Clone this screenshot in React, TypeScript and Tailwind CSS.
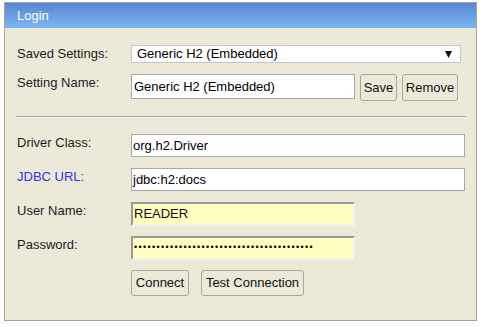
import React from 'react';

const font = { fontFamily: '"Liberation Sans", Arial, sans-serif' };

const Label = ({ children, blue }: { children: React.ReactNode; blue?: boolean }) => (
  <div className={`w-[114px] shrink-0 pt-[1px] text-[13px] leading-[15px] ${blue ? 'text-[#3232f0]' : 'text-[#1c1c1c]'}`}>
    {children}
  </div>
);

const Btn = ({ children, w }: { children: React.ReactNode; w: string }) => (
  <button
    className={`${w} h-full bg-[#ece9d8] border border-[#aaa79a] rounded-[3px] text-[13px] text-[#111] flex items-center justify-center`}
  >
    {children}
  </button>
);

export default function App() {
  const password = '•'.repeat(40);

  return (
    <div className="bg-white w-[482px] h-[327px] pl-[4px] pt-[2px]" style={font}>
      <div className="w-[473px] h-[319px] border border-[#a8a597] bg-[#ece9d8] flex flex-col">
        {/* Header */}
        <div className="h-[25px] bg-gradient-to-b from-[#5886d2] to-[#7bb6f4] flex items-center pl-[12px] text-white text-[13px]">
          Login
        </div>

        <div className="flex flex-col pl-[12px]">
          {/* Saved Settings */}
          <div className="flex mt-[17px] h-[18px]">
            <Label>Saved Settings:</Label>
            <div className="w-[330px] h-[18px] bg-white border border-[#c4c4c4] flex items-center justify-between pl-[5px] pr-[8px] text-[13px] text-black">
              <span>Generic H2 (Embedded)</span>
              <svg width="7" height="7" viewBox="0 0 7 7">
                <path d="M0 0 H7 L3.5 7 Z" fill="#111" />
              </svg>
            </div>
          </div>

          {/* Setting Name */}
          <div className="flex mt-[11px] h-[27px]">
            <Label>Setting Name:</Label>
            <div className="w-[224px] h-[25px] bg-white border border-[#a9a9a9] flex items-center pl-[2px] text-[13px] text-black">
              Generic H2 (Embedded)
            </div>
            <div className="flex gap-[5px] ml-[5px]">
              <Btn w="w-[37px]">Save</Btn>
              <Btn w="w-[56px]">Remove</Btn>
            </div>
          </div>

          {/* Separator */}
          <div className="mt-[15px] w-[450px] -ml-[1px] border-t border-[#a4a4a4] border-b border-b-[#f6f4ec]" />

          {/* Driver Class */}
          <div className="flex mt-[16px] h-[23px]">
            <Label>Driver Class:</Label>
            <div className="w-[334px] h-[23px] bg-white border border-[#a9a9a9] flex items-center pl-[1px] text-[13px] text-black">
              org.h2.Driver
            </div>
          </div>

          {/* JDBC URL */}
          <div className="flex mt-[11px] h-[23px]">
            <Label blue>JDBC URL:</Label>
            <div className="w-[334px] h-[23px] bg-white border border-[#a9a9a9] flex items-center pl-[1px] text-[13px] text-black">
              jdbc:h2:docs
            </div>
          </div>

          {/* User Name */}
          <div className="flex mt-[11px] h-[24px]">
            <Label>User Name:</Label>
            <div className="w-[224px] h-[24px] bg-[#ffffc2] border-2 border-t-[#9a9a9a] border-l-[#9a9a9a] border-r-[#f2f0e8] border-b-[#f2f0e8] flex items-center pl-[1px] text-[13px] text-[#1a0a00]">
              READER
            </div>
          </div>

          {/* Password */}
          <div className="flex mt-[10px] h-[24px]">
            <Label>Password:</Label>
            <div className="w-[224px] h-[24px] bg-[#ffffc2] border-2 border-t-[#9a9a9a] border-l-[#9a9a9a] border-r-[#f2f0e8] border-b-[#f2f0e8] flex items-center pl-[1px] text-[9px] tracking-[1.35px] text-black overflow-hidden whitespace-nowrap">
              {password}
            </div>
          </div>

          {/* Actions */}
          <div className="flex mt-[10px] h-[26px]">
            <div className="w-[114px] shrink-0" />
            <div className="flex gap-[12px] h-[26px]">
              <Btn w="w-[58px]">Connect</Btn>
              <Btn w="w-[103px]">Test Connection</Btn>
            </div>
          </div>
        </div>
      </div>
    </div>
  );
}
